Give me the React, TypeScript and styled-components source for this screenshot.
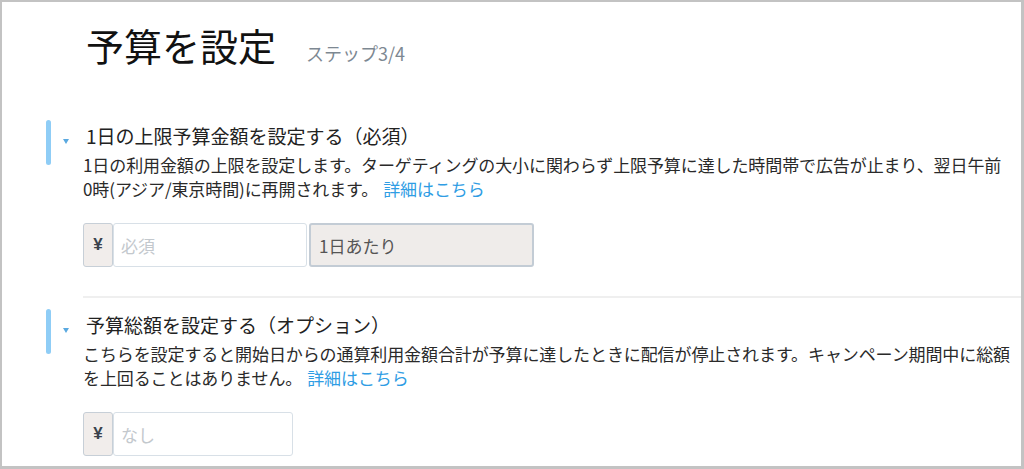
import styled, { createGlobalStyle } from "styled-components";

const GlobalStyle = createGlobalStyle`
  html, body {
    margin: 0;
    padding: 0;
    background: #ffffff;
  }
  body {
    font-family: "Noto Sans CJK JP", "Liberation Sans", sans-serif;
    color: #222222;
  }
`;

interface ISection {
  title: string;
  lines: string[];
  children: React.ReactNode;
  divided?: boolean;
}

const BudgetSection = ({ title, lines, children, divided }: ISection) => {
  return (
    <>
      {divided ? <Divider /> : null}
      <Section $first={!divided}>
        <AccentBar />
        <Marker>
          <Triangle />
        </Marker>
        <SectionBody>
          <SectionTitle>{title}</SectionTitle>
          <Description>
            {lines[0]}
            <br />
            {lines[1]}
            <DetailLink href="#">詳細はこちら</DetailLink>
          </Description>
          <InputRow>{children}</InputRow>
        </SectionBody>
      </Section>
    </>
  );
};

const App = () => {
  return (
    <Frame>
      <GlobalStyle />
      <Header>
        <PageTitle>予算を設定</PageTitle>
        <Step>ステップ3/4</Step>
      </Header>

      <BudgetSection
        title="1日の上限予算金額を設定する（必須）"
        lines={[
          "1日の利用金額の上限を設定します。ターゲティングの大小に関わらず上限予算に達した時間帯で広告が止まり、翌日午前",
          "0時(アジア/東京時間)に再開されます。",
        ]}
      >
        <Currency>¥</Currency>
        <AmountInput placeholder="必須" $width={194} />
        <UnitBox>1日あたり</UnitBox>
      </BudgetSection>

      <BudgetSection
        divided
        title="予算総額を設定する（オプション）"
        lines={[
          "こちらを設定すると開始日からの通算利用金額合計が予算に達したときに配信が停止されます。キャンペーン期間中に総額",
          "を上回ることはありません。",
        ]}
      >
        <Currency>¥</Currency>
        <AmountInput placeholder="なし" $width={180} />
      </BudgetSection>
    </Frame>
  );
};

const Frame = styled.div`
  box-sizing: border-box;
  width: 1024px;
  height: 469px;
  overflow: hidden;
  background: #ffffff;
  border-style: solid;
  border-color: #c3c3c3;
  border-width: 2px 3px 3px 2px;
`;

const Header = styled.div`
  display: flex;
  align-items: baseline;
  gap: 30px;
  padding: 20px 0 0 84px;
`;

const PageTitle = styled.h1`
  margin: 0;
  font-size: 38px;
  font-weight: 400;
  line-height: 46px;
  color: #111111;
`;

const Step = styled.span`
  font-size: 18px;
  color: #7d8892;
`;

const Section = styled.div<{ $first: boolean }>`
  display: flex;
  align-items: flex-start;
  padding-left: 44px;
  margin-top: ${(p) => (p.$first ? "52px" : "11px")};
`;

const AccentBar = styled.div`
  width: 5px;
  height: 45px;
  border-radius: 3px;
  background: #8fcdf6;
`;

const Marker = styled.div`
  width: 32px;
  padding-top: 19px;
  padding-left: 12px;
  box-sizing: border-box;
`;

const Triangle = styled.div`
  width: 0;
  height: 0;
  border-left: 3.5px solid transparent;
  border-right: 3.5px solid transparent;
  border-top: 5px solid #5aa9e0;
`;

const SectionBody = styled.div`
  flex: 1;
  padding-top: 3px;
`;

const SectionTitle = styled.h2`
  margin: 0 0 0 3px;
  font-size: 19px;
  font-weight: 400;
  line-height: 25px;
  color: #222222;
`;

const Description = styled.p`
  margin: 5px 0 0;
  font-size: 17px;
  line-height: 24px;
  letter-spacing: -0.1px;
  color: #2a2a2a;
  white-space: nowrap;
`;

const DetailLink = styled.a`
  margin-left: 5px;
  color: #2f9de4;
  text-decoration: none;
`;

const InputRow = styled.div`
  display: flex;
  margin-top: 22px;
  height: 44px;
`;

const Currency = styled.div`
  box-sizing: border-box;
  width: 30px;
  display: flex;
  align-items: center;
  justify-content: center;
  background: #f1edeb;
  border: 1px solid #c7cfd7;
  border-radius: 3px;
  font-family: "Liberation Sans", sans-serif;
  font-weight: 700;
  font-size: 17px;
  color: #3a424c;
`;

const AmountInput = styled.input<{ $width: number }>`
  box-sizing: border-box;
  width: ${(p) => p.$width}px;
  height: 44px;
  margin: 0;
  padding: 0 7px;
  border: 1px solid #d8e0e7;
  border-radius: 3px;
  background: #ffffff;
  font-family: "Noto Sans CJK JP", sans-serif;
  font-size: 17px;
  outline: none;

  &::placeholder {
    color: #c3c8cd;
  }
`;

const UnitBox = styled.div`
  box-sizing: border-box;
  width: 225px;
  margin-left: 2px;
  display: flex;
  align-items: center;
  padding-left: 8px;
  background: #efecea;
  border: 2px solid #c3ccd5;
  border-radius: 3px;
  font-size: 17px;
  color: #555555;
`;

const Divider = styled.div`
  margin: 29px 0 0 81px;
  height: 2px;
  background: #efefef;
`;

export default App;
